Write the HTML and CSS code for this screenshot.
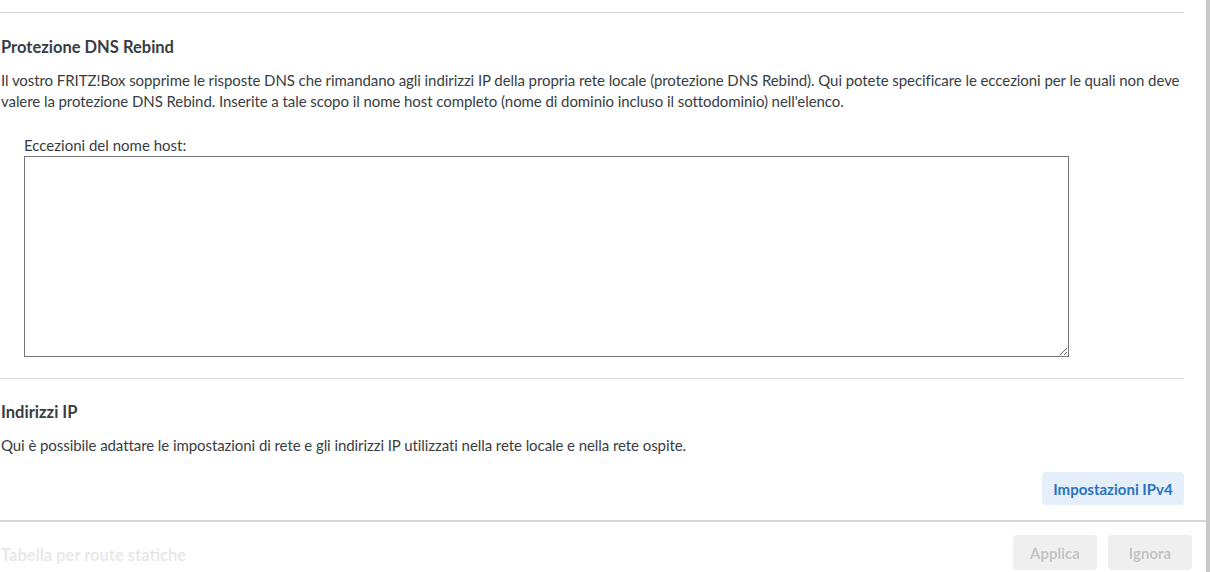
FILE: index.html
```html
<!DOCTYPE html>
<html lang="it">
<head>
<meta charset="UTF-8">
<meta name="viewport" content="width=device-width, initial-scale=1.0">
<title>Rete - DNS Rebind</title>
<link rel="stylesheet" href="styles.css">
</head>
<body>
<div class="page">
  <div class="main">
    <div class="content">
      <div class="section">
        <h2>Protezione DNS Rebind</h2>
        <p>Il vostro FRITZ!Box sopprime le risposte DNS che rimandano agli indirizzi IP della propria rete locale (protezione DNS Rebind). Qui potete specificare le eccezioni per le quali non deve valere la protezione DNS Rebind. Inserite a tale scopo il nome host completo (nome di dominio incluso il sottodominio) nell'elenco.</p>
        <div class="field">
          <label for="rebindExceptions">Eccezioni del nome host:</label>
          <textarea id="rebindExceptions"></textarea>
        </div>
      </div>
      <div class="section">
        <h2>Indirizzi IP</h2>
        <p>Qui è possibile adattare le impostazioni di rete e gli indirizzi IP utilizzati nella rete locale e nella rete ospite.</p>
        <div class="actions">
          <button class="btn-link">Impostazioni IPv4</button>
        </div>
      </div>
      <div class="section">
        <h2>Tabella per route statiche</h2>
      </div>
    </div>
  </div>
  <div class="rail"></div>
</div>

<div class="footer">
  <button class="btn-footer" disabled>Applica</button>
  <button class="btn-footer" disabled>Ignora</button>
</div>
</body>
</html>
```
FILE: styles.css
```css
html, body {
  margin: 0;
  height: 100%;
  overflow: hidden;
}

body {
  font-family: 'Lato', sans-serif;
  font-size: 15px;
  line-height: 21px;
  color: #383d43;
  background: #fff;
}

.page {
  display: flex;
  height: 100%;
}

.main {
  flex: 1;
  padding-top: 12px;
}

.rail {
  width: 4px;
  background-color: #c9c9c9;
}

.content {
  width: 1184px;
}

.section {
  border-top: 1px solid #d6d6d6;
  padding-top: 22px;
  padding-bottom: 21px;
}

.section + .section {
  padding-top: 21px;
}

h2 {
  margin: 0 0 11px 1px;
  font-size: 16.5px;
  font-weight: 700;
  line-height: 24px;
}

p {
  margin: 0 0 23px 1px;
  letter-spacing: -0.07px;
}

.field {
  margin-left: 24px;
}

label {
  display: block;
}

textarea {
  display: block;
  width: 1045px;
  height: 201px;
  box-sizing: border-box;
  margin: 0;
  border: 1px solid #767676;
  font-family: 'Lato', sans-serif;
}

.actions {
  display: flex;
  justify-content: flex-end;
  margin-top: -7px;
  margin-bottom: -5px;
}

.btn-link {
  height: 33px;
  width: 142px;
  border: none;
  border-radius: 4px;
  background-color: #e4eff9;
  color: #2a72c2;
  font-family: 'Lato', sans-serif;
  font-size: 15px;
  font-weight: 700;
  cursor: pointer;
}

.footer {
  position: fixed;
  left: 0;
  right: 4px;
  bottom: 0;
  height: 52px;
  border-top: 2px solid #d6d6d6;
  background: rgba(255, 255, 255, 0.88);
  display: flex;
  justify-content: flex-end;
  align-items: flex-start;
  gap: 11px;
  padding: 13px 14px 0 0;
  box-sizing: border-box;
}

.btn-footer {
  width: 84px;
  height: 35px;
  border: none;
  border-radius: 4px;
  background-color: #efefef;
  color: #c3c3c3;
  font-family: 'Lato', sans-serif;
  font-size: 15px;
  font-weight: 700;
}
```
